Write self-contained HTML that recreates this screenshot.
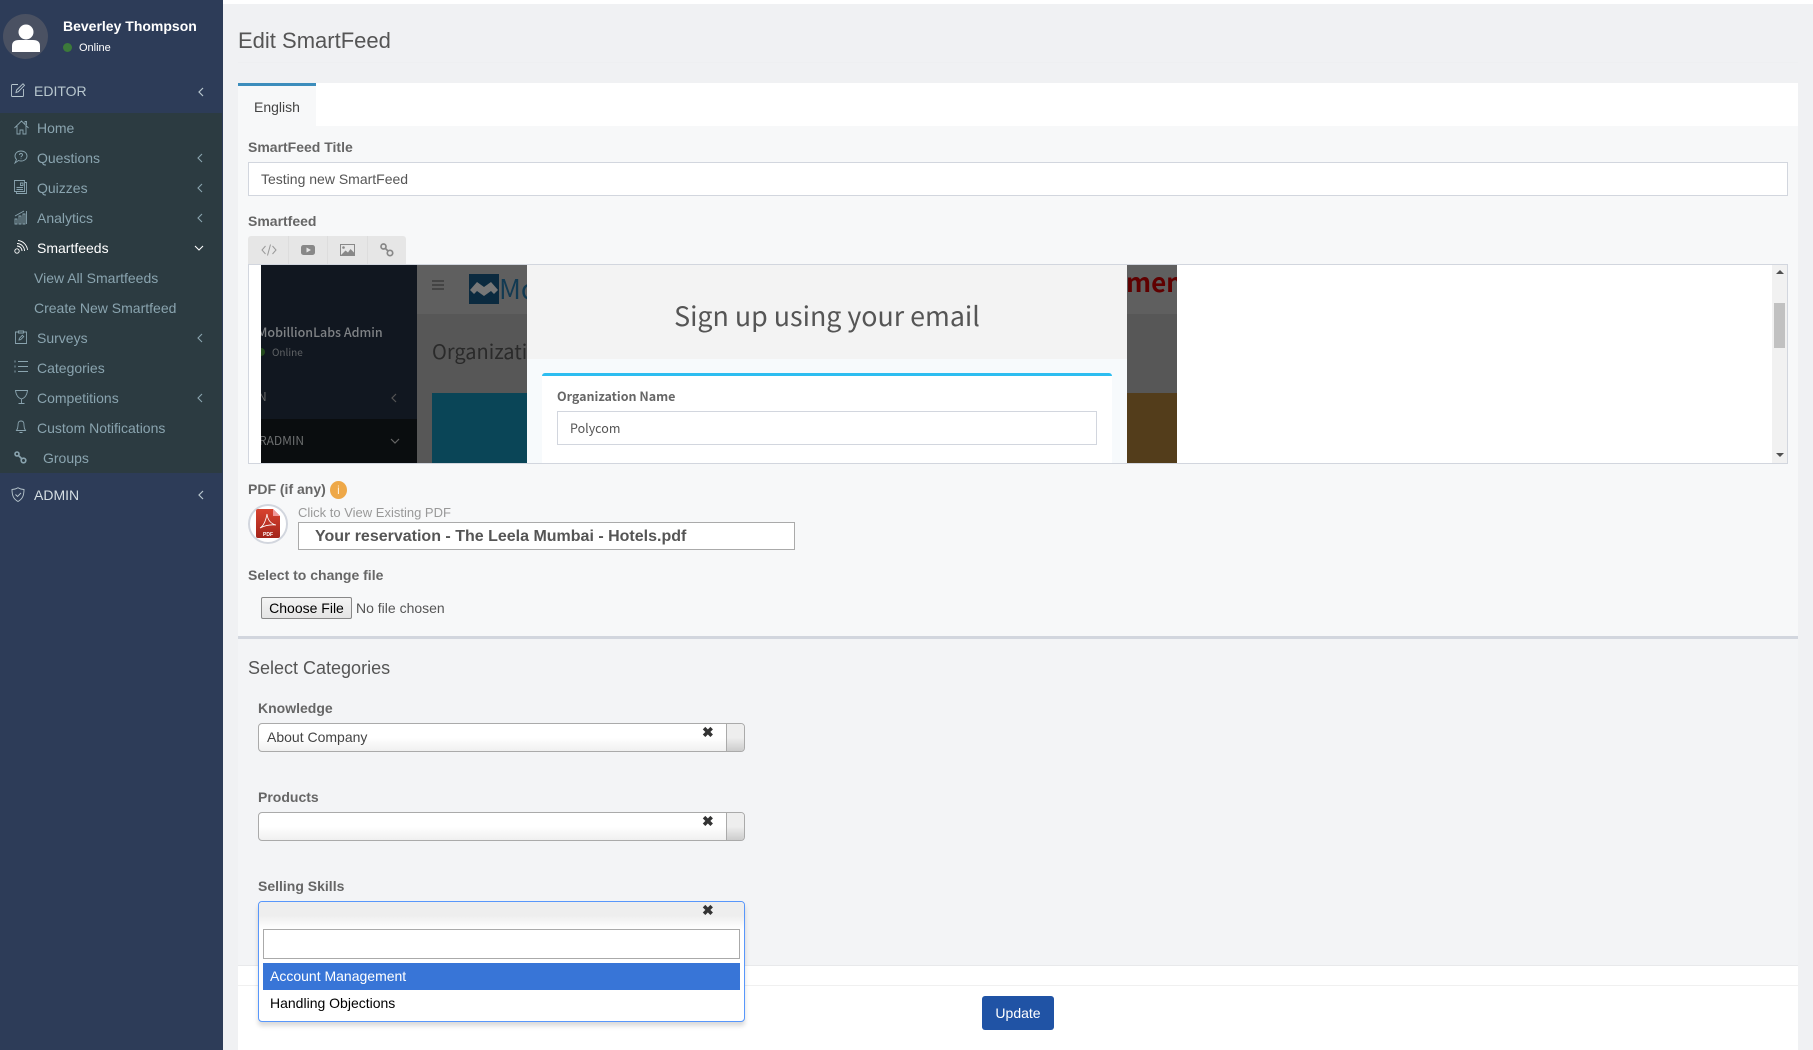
<!DOCTYPE html>
<html><head><meta charset="utf-8"><title>Edit SmartFeed</title>
<style>
*{box-sizing:border-box}
html,body{margin:0;padding:0;width:1813px;height:1050px;overflow:hidden;background:#f0f1f3;font-family:"Liberation Sans",sans-serif;font-size:14px}
.a{position:absolute}
.t{position:absolute;white-space:nowrap;line-height:20px}
.nav{color:#8aa4af;left:37px}
.lab{font-weight:700;color:#666;left:248px}
svg{position:absolute;overflow:visible}
.ic{fill:none;stroke:#8aa4af;stroke-width:.9}
.sel{position:absolute;left:258px;width:487px;height:29px;border:1px solid #aaa;border-radius:4px;background:linear-gradient(#fff 0,#fff 50%,#f0f0f0 100%);}
.sel b{position:absolute;right:0;top:0;width:18px;height:27px;border-left:1px solid #aaa;background:linear-gradient(#eee 50%,#ccc 100%);border-radius:0 3px 3px 0}
.x{position:absolute;left:685px;font-size:14px;font-weight:700;color:#333;line-height:16px}
.ns{font-family:"Noto Sans CJK SC","Liberation Sans",sans-serif}
</style></head><body>
<!-- content regions -->
<div class="a" style="left:223px;top:0;width:1590px;height:4px;background:#fff"></div>
<div class="a" style="left:238px;top:62px;width:1560px;height:1px;background:#eeeff1"></div>
<div class="t" style="left:238px;top:28px;font-size:22px;line-height:26px;color:#555">Edit SmartFeed</div>
<div class="a" style="left:238px;top:83px;width:1560px;height:43px;background:#fff"></div>
<div class="a" style="left:238px;top:83px;width:78px;height:43px;background:#f7f8f9;border-top:3px solid #3c8dbc"></div>
<div class="t" style="left:254px;top:97px;color:#444">English</div>
<div class="a" style="left:238px;top:126px;width:1560px;height:510px;background:#f7f8f9"></div>
<div class="a" style="left:238px;top:636px;width:1560px;height:3px;background:#d2d6de"></div>
<div class="a" style="left:238px;top:639px;width:1560px;height:326px;background:#f3f4f6"></div>
<div class="a" style="left:238px;top:965px;width:1560px;height:85px;background:#fff;border-top:1px solid #e8e9eb"></div>
<div class="a" style="left:238px;top:985px;width:1560px;height:1px;background:#f0f0f0"></div>

<div class="t lab" style="top:137px">SmartFeed Title</div>
<div class="a" style="left:248px;top:162px;width:1540px;height:34px;background:#fff;border:1px solid #d2d6de"></div>
<div class="t" style="left:261px;top:169px;color:#555">Testing new SmartFeed</div>
<div class="t lab" style="top:211px">Smartfeed</div>

<!-- toolbar -->
<div class="a" style="left:248px;top:236px;width:158px;height:28px;background:#e6e6e6;border-radius:3px 3px 0 0"></div>
<div class="a" style="left:288px;top:236px;width:1px;height:28px;background:#ddd"></div>
<div class="a" style="left:327px;top:236px;width:1px;height:28px;background:#ddd"></div>
<div class="a" style="left:367px;top:236px;width:1px;height:28px;background:#ddd"></div>
<svg style="left:261px;top:243px" width="16" height="14" viewBox="0 0 16 14"><path d="M4.500 3 1 7l3.500 4M11.500 3 15 7l-3.500 4M9.500 1.500 6.500 12.500" fill="none" stroke="#999" stroke-width="1"/></svg>
<svg style="left:301px;top:245px" width="15" height="11" viewBox="0 0 15 11"><rect width="14" height="10" rx="2.500" fill="#888"/><path d="M5.500 2.500 10 5 5.500 7.500z" fill="#e6e6e6"/></svg>
<svg style="left:340px;top:244px" width="15" height="12" viewBox="0 0 15 12"><rect x=".5" y=".5" width="14" height="11" fill="none" stroke="#888"/><circle cx="3.500" cy="3.500" r="1.300" fill="#888"/><path d="M1 11 5.500 6.500 8 8.500 10.500 5 14 8.500V11z" fill="#888"/></svg>
<svg style="left:380px;top:243px" width="14" height="14" viewBox="0 0 14 14"><g fill="none" stroke="#888" stroke-width="1.700"><circle cx="3.500" cy="3.500" r="2.500"/><circle cx="10" cy="10" r="2.700"/><path d="M5.500 5.500l2.500 2.500"/></g></svg>

<!-- editor -->
<div class="a" style="left:248px;top:264px;width:1540px;height:200px;background:#fff;border:1px solid #d2d6de;overflow:hidden">
  <div class="a" style="left:12px;top:0;width:156px;height:198px;background:#111720;overflow:hidden">
    <div class="a" style="left:0;top:154px;width:156px;height:44px;background:#0a0d0f"></div>
    <div class="t ns" style="left:-4px;top:57px;font-size:12.500px;font-weight:500;color:#7f8285">MobillionLabs Admin</div>
    <div class="a" style="left:-1px;top:83px;width:5px;height:8px;background:#234a1c;border-radius:0 4px 4px 0"></div>
    <div class="t ns" style="left:11px;top:77px;font-size:10px;color:#5f6265">Online</div>
    <div class="t ns" style="left:-3px;top:122px;font-size:12px;color:#666">N</div>
    <div class="t ns" style="left:-2px;top:166px;font-size:12px;color:#6d6f70">RADMIN</div>
  </div>
  <svg style="left:141px;top:128px" width="8" height="10" viewBox="0 0 8 10"><path d="M6 1 2 5l4 4" fill="none" stroke="#555" stroke-width="1.200"/></svg>
  <svg style="left:141px;top:172px" width="10" height="8" viewBox="0 0 10 8"><path d="M1 2l4 4 4-4" fill="none" stroke="#666" stroke-width="1.200"/></svg>
  <div class="a" style="left:168px;top:0;width:110px;height:49px;background:#5f5f5f"></div>
  <div class="a" style="left:168px;top:49px;width:110px;height:149px;background:#575757"></div>
  <div class="a" style="left:183px;top:128px;width:95px;height:70px;background:#0a4557"></div>
  <div class="a" style="left:183px;top:15px;width:12px;height:2px;background:#444;box-shadow:0 4px #444,0 8px #444"></div>
  <svg style="left:220px;top:9px" width="30" height="30" viewBox="0 0 30 30"><rect width="30" height="30" fill="#0b2a3f"/><path d="M1 16 8 8 15 13 22 8 29 16 25 20 22 17 15 22 8 17 5 20z" fill="#777"/></svg>
  <div class="t ns" style="left:250px;top:6px;font-size:27px;line-height:34px;color:#123a52">Mo</div>
  <div class="t ns" style="left:183px;top:71px;font-size:20px;line-height:30px;color:#2a2a2a">Organization</div>
  <div class="a" style="left:278px;top:0;width:600px;height:198px;background:#f7fafc"></div>
  <div class="a" style="left:278px;top:0;width:600px;height:94px;background:#f3f3f3"></div>
  <div class="t ns" style="left:278px;width:600px;text-align:center;top:30px;font-size:26.800px;line-height:40px;color:#555">Sign up using your email</div>
  <div class="a" style="left:293px;top:108px;width:570px;height:90px;background:#fff;border-top:3px solid #2dbdf0;border-radius:3px 3px 0 0"></div>
  <div class="t ns" style="left:308px;top:121px;font-size:12.500px;font-weight:700;color:#666">Organization Name</div>
  <div class="a" style="left:308px;top:146px;width:540px;height:34px;background:#fff;border:1px solid #d2d6de"></div>
  <div class="t ns" style="left:321px;top:153px;font-size:12.500px;color:#555">Polycom</div>
  <div class="a" style="left:878px;top:0;width:50px;height:49px;background:#5f5f5f"></div>
  <div class="a" style="left:878px;top:49px;width:50px;height:79px;background:#575757"></div>
  <div class="a" style="left:878px;top:128px;width:50px;height:70px;background:#533d1b"></div>
  <div class="a ns" style="left:877px;top:0;width:51px;height:36px;overflow:hidden;font-size:26px;font-weight:700;line-height:34px;color:#5f0000;white-space:nowrap">ment</div>
  <div class="a" style="left:1523px;top:0;width:15px;height:198px;background:#f1f1f1"></div>
  <div class="a" style="left:1525px;top:38px;width:11px;height:45px;background:#c1c1c1"></div>
  <svg style="left:1527px;top:5px" width="8" height="5"><path d="M4 0 8 4H0z" fill="#505050"/></svg>
  <svg style="left:1527px;top:188px" width="8" height="5"><path d="M0 0H8L4 4z" fill="#505050"/></svg>
</div>

<!-- PDF -->
<div class="t lab" style="top:479px">PDF (if any)</div>
<div class="a" style="left:330px;top:481px;width:17px;height:18px;border-radius:50%;background:#eea848;color:#fff0d8;text-align:center;font-size:12px;line-height:18px">i</div>
<svg style="left:248px;top:504px" width="40" height="40" viewBox="0 0 40 40"><defs><linearGradient id="g" x1="0" y1="0" x2="0" y2="1"><stop offset="0" stop-color="#d8432f"/><stop offset="1" stop-color="#a3241b"/></linearGradient></defs><circle cx="20" cy="20" r="19" fill="#fff" stroke="#d2d6de" stroke-width="2"/><path d="M8 7q0-2 2-2h15l7 7v20q0 2-2 2H10q-2 0-2-2z" fill="url(#g)"/><path d="M25 5v7h7z" fill="#e99"/><path d="M12 24q5-3 7-14 1 9 9 11-8-1-16 3z" fill="none" stroke="#fff" stroke-width=".8"/><text x="20" y="32" font-size="5" font-weight="700" fill="#fff" text-anchor="middle" font-family="Liberation Sans">PDF</text></svg>
<div class="t" style="left:298px;top:503px;font-size:13px;color:#999">Click to View Existing PDF</div>
<div class="a" style="left:298px;top:522px;width:497px;height:28px;background:#fff;border:1px solid #aaa"></div>
<div class="t" style="left:315px;top:527px;font-size:16px;font-weight:700;color:#555">Your reservation - The Leela Mumbai - Hotels.pdf</div>
<div class="t lab" style="top:565px">Select to change file</div>
<div class="a" style="left:261px;top:597px;width:91px;height:22px;background:linear-gradient(#f4f4f4,#e4e4e4);border:1px solid #888;border-radius:2px;color:#000;text-align:center;line-height:20px">Choose File</div>
<div class="t" style="left:356px;top:598px;color:#555">No file chosen</div>

<div class="t" style="left:248px;top:658px;font-size:18px;color:#555">Select Categories</div>

<div class="t lab" style="left:258px;top:698px">Knowledge</div>
<div class="sel" style="top:723px"><b></b></div>
<div class="t" style="left:267px;top:727px;color:#444">About Company</div>
<div class="x" style="left:702px;top:724px">✖</div>
<div class="t lab" style="left:258px;top:787px">Products</div>
<div class="sel" style="top:812px"><b></b></div>
<div class="x" style="left:702px;top:813px">✖</div>
<div class="t lab" style="left:258px;top:876px">Selling Skills</div>

<div class="a" style="left:258px;top:901px;width:487px;height:121px;background:#fff;border:1px solid #5897fb;border-radius:4px;box-shadow:0 4px 5px rgba(0,0,0,.15)"></div>
<div class="a" style="left:259px;top:902px;width:485px;height:27px;background:linear-gradient(#eee 50%,#fff);border-radius:3px 3px 0 0"></div>
<div class="x" style="left:702px;top:902px">✖</div>
<div class="a" style="left:263px;top:929px;width:477px;height:30px;background:#fff;border:1px solid #aaa"></div>
<div class="a" style="left:263px;top:963px;width:477px;height:27px;background:#3875d7"></div>
<div class="t" style="left:270px;top:966px;color:#fff">Account Management</div>
<div class="t" style="left:270px;top:993px;color:#000">Handling Objections</div>

<div class="a" style="left:982px;top:996px;width:72px;height:34px;background:#2053a5;border-radius:3px;color:#fff;text-align:center;line-height:34px">Update</div>

<!-- sidebar -->
<div class="a" style="left:0;top:0;width:223px;height:1050px;background:#2d3c58"></div>
<div class="a" style="left:0;top:113px;width:222px;height:360px;background:#2c3b41"></div>
<div class="a" style="left:3px;top:14px;width:45px;height:45px;border-radius:50%;background:#4a5162"></div>
<svg style="left:12px;top:24px" width="28" height="29" viewBox="0 0 28 29"><circle cx="14" cy="8" r="7.500" fill="#fff"/><path d="M0 28V22q0-6 7-6h14q7 0 7 6v6z" fill="#fff"/></svg>
<div class="t" style="left:63px;top:16px;font-weight:700;color:#fff">Beverley Thompson</div>
<div class="a" style="left:63px;top:43px;width:9px;height:9px;border-radius:50%;background:#3c7a3a"></div>
<div class="t" style="left:79px;top:38px;font-size:11px;color:#fff">Online</div>

<svg style="left:11px;top:83px" width="14" height="14" viewBox="0 0 14 14"><path d="M7 1.500H1.500a1 1 0 0 0-1 1v10a1 1 0 0 0 1 1h10a1 1 0 0 0 1-1V6M5 9.500l.6-2.500L12 .8l1.500 1.500L7.300 8.700z" fill="none" stroke="#b8c7ce" stroke-width=".9"/></svg>
<div class="t" style="left:34px;top:81px;color:#b8c7ce">EDITOR</div>
<svg style="left:197px;top:87px" width="8" height="10" viewBox="0 0 8 10"><path d="M6 1 2 5l4 4" fill="none" stroke="#b8c7ce" stroke-width="1.200"/></svg>

<svg style="left:14px;top:120px" width="15" height="15" viewBox="0 0 15 15"><path class="ic" d="M.5 8 7.500 1l7 7M3 6v8h3V10h3v4h3V6M11 4V1.500h1.500V5"/></svg>
<div class="t nav" style="top:118px">Home</div>
<svg style="left:14px;top:150px" width="14" height="14" viewBox="0 0 14 14"><path class="ic" d="M7 1c3.500 0 6 2.200 6 5s-2.500 5-6 5c-1 0-1.500 0-2.500-.5L1 13l1.500-3.500C1.500 8.500 1 7.500 1 6c0-2.800 2.500-5 6-5zM5.500 5c0-2 3-2 3 0 0 1-1.500 1-1.500 2.200M7 8.500v.6"/></svg>
<div class="t nav" style="top:148px">Questions</div>
<svg style="left:14px;top:180px" width="13" height="14" viewBox="0 0 13 14"><path class="ic" d="M.5.500h10v11H.5zM11 2.500h1.500v11H2.500V12M2.500 7.500h6.500M2.500 9.500h6.500M6.500 3h2.500v2.500H6.500z"/></svg>
<div class="t nav" style="top:178px">Quizzes</div>
<svg style="left:14px;top:210px" width="14" height="14" viewBox="0 0 14 14"><path class="ic" d="M1 9h2v5H1zM5 6h2v8H5zM9 4h2v10H9zM12.500 1v13M1 6 10 1"/></svg>
<div class="t nav" style="top:208px">Analytics</div>
<svg style="left:14px;top:239px" width="15" height="15" viewBox="0 0 15 15"><g fill="none" stroke="#fff" stroke-width=".9"><circle cx="3" cy="12" r="2.200"/><path d="M3 7a5 5 0 0 1 5 5M3 4.500a7.500 7.500 0 0 1 7.500 7.500M4 1.500a10.500 10.500 0 0 1 9.500 9.500"/></g></svg>
<div class="t" style="left:37px;top:238px;color:#fff">Smartfeeds</div>
<div class="t nav" style="left:34px;top:268px">View All Smartfeeds</div>
<div class="t nav" style="left:34px;top:298px">Create New Smartfeed</div>
<svg style="left:15px;top:330px" width="12" height="14" viewBox="0 0 12 14"><path class="ic" d="M3.500 2H.5v11.500h11V2h-3M3.500 1h5v2h-5zM4 10l.4-1.700 3-3 1.300 1.300-3 3z"/></svg>
<div class="t nav" style="top:328px">Surveys</div>
<svg style="left:14px;top:360px" width="14" height="13" viewBox="0 0 14 13"><path class="ic" d="M4 1.500h10M4 6.500h10M4 11.500h10M1 .5v2M1 5.500v2M1 10.500v2"/></svg>
<div class="t nav" style="top:358px">Categories</div>
<svg style="left:15px;top:390px" width="13" height="14" viewBox="0 0 13 14"><path class="ic" d="M.5.500h12C12 4.500 10 8 6.500 9 3 8 1 4.500.5.500zM6.500 9v4M3.500 13.500h6"/></svg>
<div class="t nav" style="top:388px">Competitions</div>
<svg style="left:16px;top:420px" width="10" height="14" viewBox="0 0 10 14"><path class="ic" d="M5 1c3 0 3 2.500 3 4.500S8.500 9 9.500 10.500H.5C1.500 9 2 7.500 2 5.500S2 1 5 1zM3.500 12.500h3"/></svg>
<div class="t nav" style="top:418px">Custom Notifications</div>
<svg style="left:14px;top:451px" width="13" height="13" viewBox="0 0 13 13"><g fill="none" stroke="#8aa4af" stroke-width="1.600"><circle cx="3" cy="3" r="2"/><circle cx="9.500" cy="9.500" r="2.300"/><path d="M4.500 4.500l3 3"/></g></svg>
<div class="t nav" style="left:43px;top:448px">Groups</div>
<svg style="left:11px;top:487px" width="14" height="15" viewBox="0 0 14 15"><path d="M7 .8c2 1.200 4 1.700 6 1.700 0 6-1.500 9.500-6 12-4.500-2.500-6-6-6-12 2 0 4-.5 6-1.700zM4.500 7.500l2 2 3.500-3.500" fill="none" stroke="#b8c7ce" stroke-width=".9"/></svg>
<div class="t" style="left:34px;top:485px;color:#d5dee3">ADMIN</div>
<svg style="left:197px;top:490px" width="8" height="10" viewBox="0 0 8 10"><path d="M6 1 2 5l4 4" fill="none" stroke="#b8c7ce" stroke-width="1.200"/></svg>

<svg style="left:196px;top:153px" width="8" height="10" viewBox="0 0 8 10"><path d="M6 1 2 5l4 4" fill="none" stroke="#8aa4af" stroke-width="1.100"/></svg>
<svg style="left:196px;top:183px" width="8" height="10" viewBox="0 0 8 10"><path d="M6 1 2 5l4 4" fill="none" stroke="#8aa4af" stroke-width="1.100"/></svg>
<svg style="left:196px;top:213px" width="8" height="10" viewBox="0 0 8 10"><path d="M6 1 2 5l4 4" fill="none" stroke="#8aa4af" stroke-width="1.100"/></svg>
<svg style="left:194px;top:244px" width="10" height="8" viewBox="0 0 10 8"><path d="M1 2l4 4 4-4" fill="none" stroke="#fff" stroke-width="1.100"/></svg>
<svg style="left:196px;top:333px" width="8" height="10" viewBox="0 0 8 10"><path d="M6 1 2 5l4 4" fill="none" stroke="#8aa4af" stroke-width="1.100"/></svg>
<svg style="left:196px;top:393px" width="8" height="10" viewBox="0 0 8 10"><path d="M6 1 2 5l4 4" fill="none" stroke="#8aa4af" stroke-width="1.100"/></svg>
</body></html>
